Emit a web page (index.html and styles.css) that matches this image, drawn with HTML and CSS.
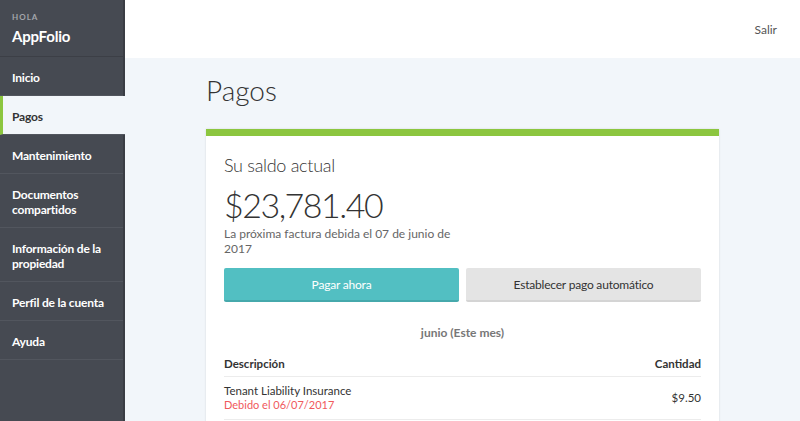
FILE: index.html
```html
<!DOCTYPE html>
<html lang="es">
<head>
    <meta charset="UTF-8">
    <title>Pagos - AppFolio</title>
    <link rel="stylesheet" href="styles.css">
</head>
<body>
    <aside class="sidebar">
        <div class="brand">
            <div class="hello">HOLA</div>
            <div class="name">AppFolio</div>
        </div>
        <nav class="nav">
            <a href="#" class="nav-item">Inicio</a>
            <a href="#" class="nav-item active">Pagos</a>
            <a href="#" class="nav-item">Mantenimiento</a>
            <a href="#" class="nav-item">Documentos compartidos</a>
            <a href="#" class="nav-item">Información de la propiedad</a>
            <a href="#" class="nav-item">Perfil de la cuenta</a>
            <a href="#" class="nav-item">Ayuda</a>
        </nav>
    </aside>

    <div class="main">
        <header class="topbar">
            <a href="#" class="logout">Salir</a>
        </header>

        <section class="content">
            <h1>Pagos</h1>

            <div class="card">
                <h2>Su saldo actual</h2>
                <div class="balance">$23,781.40</div>
                <p class="due">La próxima factura debida el 07 de junio de 2017</p>

                <div class="actions">
                    <button class="btn btn-pay">Pagar ahora</button>
                    <button class="btn btn-auto">Establecer pago automático</button>
                </div>

                <div class="month">junio (Este mes)</div>

                <div class="row head">
                    <span>Descripción</span>
                    <span>Cantidad</span>
                </div>
                <div class="row">
                    <div>
                        <div class="desc">Tenant Liability Insurance</div>
                        <div class="late">Debido el 06/07/2017</div>
                    </div>
                    <span class="amount">$9.50</span>
                </div>
            </div>
        </section>
    </div>
</body>
</html>
```

FILE: styles.css
```css
body {
    margin: 0;
    display: flex;
    min-height: 100vh;
    font-family: Lato, "Open Sans", sans-serif;
    color: #333;
    background-color: #f2f6fa;
    overflow: hidden;
}

.sidebar {
    width: 123px;
    flex-shrink: 0;
    background-color: #464a52;
    border-right: 2px solid #3a3d44;
    color: #fff;
}

.brand {
    height: 57px;
    padding: 12px 12px 0;
    box-sizing: border-box;
    border-bottom: 1px solid #3c3f46;
}

.hello {
    font-size: 8px;
    font-weight: bold;
    letter-spacing: 1px;
    color: #a3a6ab;
}

.name {
    margin-top: 5px;
    font-size: 15px;
    font-weight: bold;
    letter-spacing: -0.2px;
}

.nav-item {
    display: block;
    padding: 13px 12px 10px;
    font-size: 12px;
    font-weight: bold;
    line-height: 15px;
    letter-spacing: -0.2px;
    color: #fff;
    text-decoration: none;
    border-bottom: 1px solid #52565e;
}

.nav-item.active {
    background-color: #f2f6fa;
    color: #333;
    border-left: 3px solid #8cc63f;
    padding-left: 9px;
    margin-right: -2px;
}

.main {
    flex: 1;
}

.topbar {
    height: 58px;
    background-color: #fff;
    display: flex;
    justify-content: flex-end;
    align-items: center;
    padding-right: 23px;
}

.logout {
    font-size: 12px;
    color: #555;
    text-decoration: none;
}

.content {
    padding: 13px 0 0 81px;
}

h1 {
    margin: 0 0 20px;
    font-size: 28px;
    font-weight: 300;
    color: #333;
    line-height: 38px;
}

.card {
    width: 477px;
    padding: 16px 18px 20px;
    background-color: #fff;
    border-top: 7px solid #8cc63f;
    box-shadow: 0 0 2px rgba(0, 0, 0, 0.12);
}

h2 {
    margin: 0;
    font-size: 18px;
    font-weight: 300;
    line-height: 26px;
    letter-spacing: -0.3px;
    color: #333;
}

.balance {
    margin-top: 6px;
    font-size: 34px;
    font-weight: 300;
    line-height: 42px;
    letter-spacing: -1.5px;
    color: #333;
}

.due {
    width: 234px;
    margin: 0;
    font-size: 12px;
    line-height: 15px;
    color: #666;
}

.actions {
    display: flex;
    gap: 7px;
    margin-top: 12px;
}

.btn {
    flex: 1;
    height: 34px;
    border: none;
    border-radius: 2px;
    font-family: inherit;
    font-size: 12px;
    letter-spacing: -0.2px;
    cursor: pointer;
}

.btn-pay {
    background-color: #52bfc2;
    color: #fff;
    border-bottom: 2px solid #46a9ac;
}

.btn-auto {
    background-color: #e4e4e4;
    color: #333;
    border-bottom: 2px solid #d4d4d4;
}

.month {
    margin-top: 23px;
    text-align: center;
    font-size: 12px;
    font-weight: bold;
    color: #777;
}

.row {
    display: flex;
    justify-content: space-between;
    align-items: center;
    border-bottom: 1px solid #ececec;
    font-size: 11.5px;
}

.row.head {
    margin-top: 17px;
    padding-bottom: 6px;
    font-weight: bold;
    color: #333;
}

.row:not(.head) {
    padding: 7px 0 8px;
}

.desc {
    color: #333;
}

.late {
    color: #f0595c;
    font-size: 11px;
    margin-top: 1px;
}
```
